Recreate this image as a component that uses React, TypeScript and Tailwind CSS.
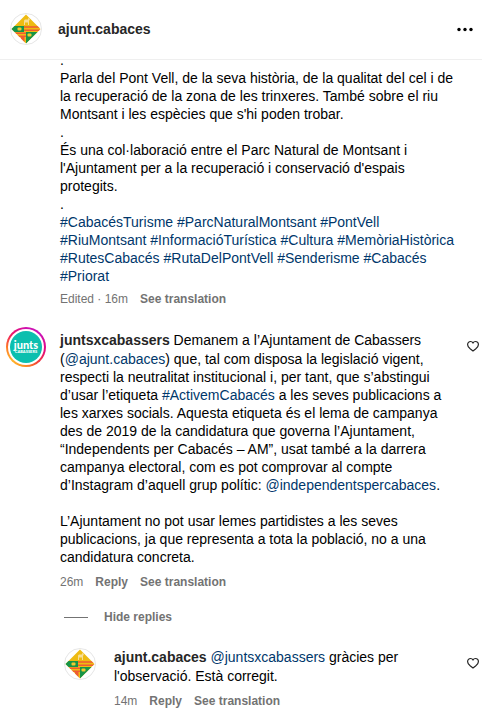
import React from "react";

const hashtags = [
  "#CabacésTurisme",
  "#ParcNaturalMontsant",
  "#PontVell",
  "#RiuMontsant",
  "#InformacióTurística",
  "#Cultura",
  "#MemòriaHistòrica",
  "#RutesCabacés",
  "#RutaDelPontVell",
  "#Senderisme",
  "#Cabacés",
  "#Priorat",
];

function TextLink({ children }: { children: React.ReactNode }) {
  return (
    <a href="#" className="text-[#00376b]">
      {children}
    </a>
  );
}

function Username({ children }: { children: React.ReactNode }) {
  return (
    <a href="#" className="inline-block pb-px font-bold text-[#262626]">
      {children}
    </a>
  );
}

function TownAvatar() {
  return (
    <svg viewBox="0 0 32 32" className="size-8 shrink-0" role="img" aria-label="ajunt.cabaces">
      <defs>
        <clipPath id="shield">
          <path d="M16 1.500 30.500 16 16 30.500 1.500 16Z" />
        </clipPath>
      </defs>
      <circle cx="16" cy="16" r="15.5" fill="#fff" stroke="#e6e6e6" />
      <g clipPath="url(#shield)">
        <rect width="32" height="32" fill="#eebb12" />
        <rect y="13" width="14" height="6" fill="#169447" />
        <rect x="7.500" y="14.500" width="4" height="3" rx="1" fill="#f0c832" />
        <path d="M14 13.200h18v1.600H14zM14 16.400h18v1.600H14z" fill="#ee5a35" />
        <path d="M0 19.600h16v1.500H0zM0 22.500h16v1.500H0z" fill="#ee5a35" />
        <rect x="16" y="19" width="16" height="6" fill="#169447" />
        <rect x="17.500" y="20.500" width="4" height="3" rx="1" fill="#f0c832" />
        <path d="M11 24h3.500v6H11z" fill="#ee5a35" />
        <path d="M16 25h6l-6 6z" fill="#169447" />
        <path d="M14 12V7.500l1-1h3l.5-2 1.500 1.500-1 2V12h-1V9.500h-3V12Z" fill="#f6de96" />
      </g>
    </svg>
  );
}

function JuntsAvatar() {
  return (
    <div className="flex size-10 shrink-0 items-center justify-center rounded-full bg-[conic-gradient(#d010b0,#c913b9_45deg,#e20780_100deg,#f34735_145deg,#ff8a22_180deg,#ffb52d_225deg,#ff7a25_270deg,#ee1762_310deg,#d010b0)]">
      <div className="flex size-9 items-center justify-center rounded-full bg-white">
        <div className="flex size-8 flex-col items-center justify-center rounded-full bg-[#0cbfae] font-[Lato,sans-serif] font-black text-white">
          <span className="text-[11px] leading-[9px]">junts</span>
          <span className="text-[4px] leading-[5px]">CABASSERS</span>
        </div>
      </div>
    </div>
  );
}

function LikeButton() {
  return (
    <button type="button" aria-label="Like" className="mt-[9px] size-3 shrink-0">
      <svg viewBox="0 0 24 24" className="size-3" fill="none" stroke="#262626" strokeWidth="2.4">
        <path d="M16.800 3A5.500 5.500 0 0 0 12 5.700 5.500 5.500 0 0 0 7.200 3C3.800 3 1.200 5.800 1.200 9.300c0 3.800 2.600 6.200 5.600 8.700L12 22l5.200-4c3-2.500 5.600-4.900 5.600-8.700C22.800 5.800 20.200 3 16.800 3Z" />
      </svg>
    </button>
  );
}

function Meta({ time, reply = true }: { time: string; reply?: boolean }) {
  return (
    <div className="flex gap-3 text-xs text-[#737373]">
      <span>{time}</span>
      {reply && (
        <button type="button" className="font-bold">
          Reply
        </button>
      )}
      <button type="button" className="font-bold">
        See translation
      </button>
    </div>
  );
}

export default function App() {
  return (
    <div className="bg-white font-['Liberation_Sans',Arial,sans-serif] text-sm leading-[18px] text-black">
      <header className="flex h-[60px] items-center gap-4 border-b border-[#efefef] pr-2 pb-[2px] pl-[10px]">
        <TownAvatar />
        <a href="#" className="font-bold text-[#262626]">
          ajunt.cabaces
        </a>
        <button type="button" aria-label="More options" className="ml-auto">
          <svg viewBox="0 0 18 18" className="size-[18px]" fill="#000">
            <circle cx="3" cy="9.500" r="1.700" />
            <circle cx="9" cy="9.500" r="1.700" />
            <circle cx="15" cy="9.500" r="1.700" />
          </svg>
        </button>
      </header>

      <main className="overflow-hidden pb-5">
        <article className="-mt-[9px] pr-6 pl-[60px]">
          <p>.</p>
          <p>
            Parla del Pont Vell, de la seva història, de la qualitat del cel i de la recuperació de la
            zona de les trinxeres. També sobre el riu Montsant i les espècies que s'hi poden trobar.
          </p>
          <p>.</p>
          <p>
            És una col·laboració entre el Parc Natural de Montsant i l'Ajuntament per a la recuperació
            i conservació d'espais protegits.
          </p>
          <p>.</p>
          <p className="mb-[6px]">
            {hashtags.map((tag) => (
              <React.Fragment key={tag}>
                <TextLink>{tag}</TextLink>{" "}
              </React.Fragment>
            ))}
          </p>
          <Meta time="Edited · 16m" reply={false} />
        </article>

        <article className="mt-5 flex items-start pr-[3px] pl-[6px]">
          <JuntsAvatar />
          <div className="mt-1 ml-[14px] flex-1 pr-[9px]">
            <p>
              <Username>juntsxcabassers</Username> Demanem a l’Ajuntament de Cabassers (
              <TextLink>@ajunt.cabaces</TextLink>) que, tal com disposa la legislació vigent, respecti
              la neutralitat institucional i, per tant, que s’abstingui d’usar l’etiqueta{" "}
              <TextLink>#ActivemCabacés</TextLink> a les seves publicacions a les xarxes socials.
              Aquesta etiqueta és el lema de campanya des de 2019 de la candidatura que governa
              l’Ajuntament, “Independents per Cabacés – AM”, usat també a la darrera campanya
              electoral, com es pot comprovar al compte d’Instagram d’aquell grup polític:{" "}
              <TextLink>@independentspercabaces</TextLink>.
            </p>
            <p className="mt-[18px] mb-2">
              L’Ajuntament no pot usar lemes partidistes a les seves publicacions, ja que representa a
              tota la població, no a una candidatura concreta.
            </p>
            <Meta time="26m" />
          </div>
          <div className="pt-1">
            <LikeButton />
          </div>
        </article>

        <button
          type="button"
          className="mt-[19px] ml-16 flex items-center gap-4 text-xs font-bold text-[#737373]"
        >
          <span className="w-6 border-t border-[#737373]" />
          Hide replies
        </button>

        <article className="mt-[23px] flex items-start pr-[3px] pl-16">
          <TownAvatar />
          <div className="ml-[18px] flex-1 pr-[9px]">
            <p className="mb-2">
              <Username>ajunt.cabaces</Username> <TextLink>@juntsxcabassers</TextLink> gràcies per
              <br />
              l'observació. Està corregit.
            </p>
            <Meta time="14m" />
          </div>
          <LikeButton />
        </article>
      </main>
    </div>
  );
}
